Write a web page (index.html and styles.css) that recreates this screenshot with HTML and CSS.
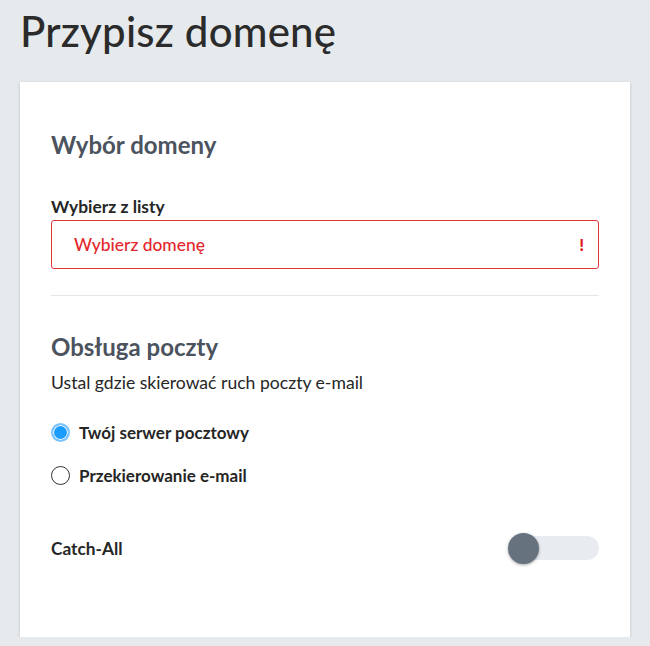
FILE: index.html
```html
<!DOCTYPE html>
<html lang="pl">
  <head>
    <meta charset="UTF-8" />
    <meta name="viewport" content="width=device-width, initial-scale=1.0" />
    <title>Przypisz domenę</title>

    <link rel="stylesheet" href="styles.css">
  </head>
  <body>
    <h1 class="page-title">Przypisz domenę</h1>

    <div class="card">
      <section class="section">
        <h2 class="section-title">Wybór domeny</h2>
        <label class="field-label">Wybierz z listy</label>
        <div class="select error">
          <span class="select-text">Wybierz domenę</span>
          <span class="select-icon">!</span>
        </div>
      </section>

      <hr class="divider" />

      <section class="section">
        <h2 class="section-title">Obsługa poczty</h2>
        <p class="section-desc">Ustal gdzie skierować ruch poczty e-mail</p>

        <label class="radio">
          <input type="radio" name="mail" checked />
          <span>Twój serwer pocztowy</span>
        </label>
        <label class="radio">
          <input type="radio" name="mail" />
          <span>Przekierowanie e-mail</span>
        </label>

        <div class="switch-row">
          <span class="switch-label">Catch-All</span>
          <span class="switch">
            <span class="switch-knob"></span>
          </span>
        </div>
      </section>
    </div>
  </body>
</html>
```

FILE: styles.css
```css
body {
  margin: 0;
  padding: 0 20px;
  background: #e7eaed;
  font-family: Lato, "Open Sans", sans-serif;
  color: #262626;
}

.page-title {
  margin: 0;
  height: 82px;
  line-height: 62px;
  font-size: 42px;
  font-weight: 500;
  color: #2b2b2b;
  letter-spacing: 0.2px;
}

.card {
  background: #fff;
  box-shadow: 0 1px 3px rgba(0, 0, 0, 0.18);
  padding: 48px 31px 77px;
}

.section-title {
  margin: 0;
  font-size: 24px;
  line-height: 30px;
  font-weight: 700;
  color: #4b535e;
}

.field-label {
  display: block;
  margin-top: 37px;
  font-size: 17.4px;
  line-height: 20px;
  font-weight: 700;
  color: #262626;
}

.select {
  margin-top: 3px;
  height: 47px;
  border: 1px solid #d8d8d8;
  border-radius: 3px;
  display: flex;
  align-items: center;
  justify-content: space-between;
  padding: 0 14px 0 22px;
}

.select.error {
  border-color: #e0363d;
}

.select-text {
  font-size: 17.4px;
  font-weight: 500;
  color: #e3262b;
}

.select-icon {
  font-size: 17px;
  font-weight: 900;
  color: #e01a22;
}

.divider {
  border: none;
  border-top: 1px solid #e6e6e6;
  margin: 26px 0 36px;
}

.section-desc {
  margin: 10px 0 27px;
  font-size: 17.6px;
  line-height: 22px;
}

.radio {
  display: flex;
  align-items: center;
  gap: 9px;
  height: 22px;
  font-size: 17px;
  font-weight: 700;
  margin-bottom: 21px;
}

.radio input {
  appearance: none;
  margin: 0;
  width: 19px;
  height: 19px;
  border: 1px solid #333;
  border-radius: 50%;
  background: #fff;
}

.radio input:checked {
  border: 2px solid #7cc3ff;
  background: #1b9cff;
  box-shadow: inset 0 0 0 1px #fff;
}

.switch-row {
  display: flex;
  align-items: center;
  justify-content: space-between;
  margin-top: 50px;
}

.switch-label {
  font-size: 17.3px;
  font-weight: 700;
}

.switch {
  width: 90px;
  height: 24px;
  border-radius: 12px;
  background: #e8ebef;
  display: flex;
  align-items: center;
}

.switch-knob {
  width: 31px;
  height: 31px;
  border-radius: 50%;
  background: #67727f;
  box-shadow: 0 1px 3px rgba(0, 0, 0, 0.35);
  margin-left: -1px;
}
```
